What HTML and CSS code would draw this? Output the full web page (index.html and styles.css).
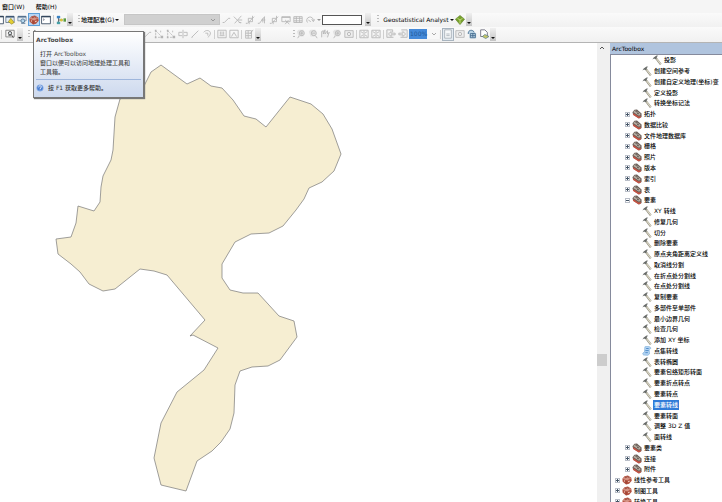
FILE: index.html
```html
<!DOCTYPE html>
<html lang="zh-CN">
<head>
<meta charset="utf-8">
<title>ArcMap</title>
<link rel="stylesheet" href="styles.css">
</head>
<body>
<svg class="defs" aria-hidden="true">
  <symbol id="toolbox" viewBox="0 0 12 12"><path d="M.5 4.500 3 1.500 7 .5l4 2.500.7 4L8.500 10.500 5 11.500.8 8z" fill="#b3503f"/><path d="M.8 4.500 6 6.500 11.300 4 7 1.500 3.500 2.500z" fill="#d59384"/><path d="M3.500 3.500 7 2l2 1.500" fill="none" stroke="#8a3b2e"/><path d="M5 6.500v4.500" stroke="#8a3b2e" stroke-width=".7"/><path d="M2.500 7l1 .5M7.500 8l1.500-.7" stroke="#f3e2d4" stroke-width="1.400"/></symbol>
  <symbol id="toolset" viewBox="0 0 12 12"><path d="M.5 4 3 1l3-.5 5.500 5v4l-3 2L1.500 7z" fill="#6b5f58"/><path d="M1.500 3.500 4 1.500l6.500 4.500-2 2z" fill="#bdb3a8"/><path d="M1.500 6l6.500 4.300 2.500-1.300" fill="none" stroke="#c65343" stroke-width="1.800"/><path d="M4 2.500 6.500 4M6 5l2.500 1" stroke="#4a423c"/></symbol>
  <symbol id="hammer" viewBox="0 0 12 12"><path d="M4.500 3.500 10.500 11.200" stroke="#8f8b7c" stroke-width="2.400"/><path d="M4.800 3.600 10.600 11" stroke="#dedac8" stroke-width="1.300"/><path d="M.5 5.500 2 3 5.500.6 7.500.8 5.500 2.500 6 3.800 4 5 2.600 4.300z" fill="#686b69"/></symbol>
  <symbol id="script" viewBox="0 0 12 12"><path d="M3.500 1C6 0 11 .5 10.500 3L8.500 4 9 9.500 7 11.200 2 10.800C0 10 1 7.500 3 7.500z" fill="#b4d4f3" stroke="#79add9" stroke-width=".8"/><path d="M5 3h3M4 5.500h4M4 8h3" stroke="#3e7fc1"/></symbol>
  <symbol id="note" viewBox="0 0 12 12"><path d="M1 2h10v7H1z" fill="#e6eef5" stroke="#65798e"/><path d="M1 2h10" stroke="#3c5674" stroke-width="2"/><path d="M7 4l4 5-3 2-4-3z" fill="#e3cf35" stroke="#8c7b25" stroke-width=".7"/></symbol>
  <symbol id="search" viewBox="0 0 12 12"><path d="M1 2h10v5H1z" fill="#e4ebf2" stroke="#7891a9"/><path d="M1 2h10" stroke="#54718e" stroke-width="2"/><circle cx="7" cy="7" r="2.300" fill="#b5d7ed" stroke="#50718f"/><path d="M5 10h5" stroke="#50718f"/></symbol>
  <symbol id="window" viewBox="0 0 12 12"><path d="M.7 1.500h10.600v9H.7z" fill="#fff" stroke="#33465c"/><path d="M.5 2h11" stroke="#33465c" stroke-width="1.600"/><path d="M2.500 4.500l1.500 1-1.500 1" fill="none" stroke="#667"/></symbol>
  <symbol id="model" viewBox="0 0 12 12"><path d="M3 2v7M3 6h5" stroke="#555"/><path d="M1 1h4v3H1z" fill="#3a82c3"/><path d="M1 8h4v3H1z" fill="#48a0a8"/><circle cx="6.500" cy="6" r="1.800" fill="#d6c33e"/><path d="M9 4h3v4H9z" fill="#5a9943"/></symbol>
  <symbol id="identify" viewBox="0 0 12 12"><path d="M1 1.500h10v8H1z" fill="#f7f7f7" stroke="#777"/><circle cx="6" cy="5" r="2" fill="#dce4ea" stroke="#444"/><path d="M7.500 6.500l2.500 4M4 7.500h3" stroke="#444"/></symbol>
  <symbol id="line" viewBox="0 0 12 12"><path d="M2 9h2l5-5h2" fill="none" stroke="currentColor"/></symbol>
  <symbol id="cross" viewBox="0 0 12 12"><path d="M1 2l8 8M10 1 2 10M6 6h5M7 9h3" stroke="currentColor"/></symbol>
  <symbol id="shift" viewBox="0 0 12 12"><path d="M1 10h2l8-8M4 4h5v4H4zM5 8v3M9 1v3" fill="none" stroke="currentColor"/></symbol>
  <symbol id="angle" viewBox="0 0 12 12"><path d="M1 10h2l6-8v8M5 6h5M7 4v5" fill="none" stroke="currentColor"/></symbol>
  <symbol id="table" viewBox="0 0 12 12"><path d="M1 2h10v7H1zM1 4h10M1 7h10M4 2v7M8 2v7" fill="none" stroke="currentColor"/></symbol>
  <symbol id="tablex" viewBox="0 0 12 12"><path d="M1 2h10v6H1zM1 3h10M5 6l5 5M9 6l-4 5" fill="none" stroke="currentColor"/></symbol>
  <symbol id="rotate" viewBox="0 0 12 12"><path d="M3 9A4 4 0 1 1 10 7M8 5l2 3 2-3M4 6l3 2" fill="none" stroke="currentColor"/></symbol>
  <symbol id="nodes" viewBox="0 0 12 12"><path d="M2 2v8M2 2l7 7M5 10h5M8 2v3" stroke="currentColor" stroke-dasharray="2 1"/><path d="M1 1h2v2H1zM1 9h2v2H1zM8 8h3v3H8z" fill="currentColor"/></symbol>
  <symbol id="split" viewBox="0 0 12 12"><path d="M6 1v10M5 4H1v4h4M7 4h4v4H7" fill="none" stroke="currentColor"/></symbol>
  <symbol id="slash" viewBox="0 0 12 12"><path d="M2 10 10 2M2 10h1" stroke="currentColor"/></symbol>
  <symbol id="hook" viewBox="0 0 12 12"><path d="M2 4c3-4 9-2 8 2-1 3-3 4-3 4M4 5h3v3" fill="none" stroke="currentColor"/></symbol>
  <symbol id="tri" viewBox="0 0 12 12"><path d="M1 1.500h10v9H1zM3 9l3-5 3 5" fill="none" stroke="currentColor"/></symbol>
  <symbol id="cols" viewBox="0 0 12 12"><path d="M1 1.500h10v9H1zM4 3v4M6 3v4M8 3v4M3 8h6" fill="none" stroke="currentColor"/></symbol>
  <symbol id="form" viewBox="0 0 12 12"><path d="M2 2h7v9H2zM2 5h7M2 8h7M5 2v9M7 6l4-5" fill="none" stroke="currentColor"/></symbol>
  <symbol id="zoomin" viewBox="0 0 12 12"><path d="M1 3l2-2h6v8H3z" fill="#e4e4e4"/><circle cx="7" cy="5" r="3" fill="none" stroke="currentColor"/><path d="M4 8l-2 3M5 5h4M7 3v4" stroke="currentColor"/></symbol>
  <symbol id="zoomout" viewBox="0 0 12 12"><path d="M1 3l2-2h6v8H3z" fill="#e4e4e4"/><circle cx="7" cy="5" r="3" fill="none" stroke="currentColor"/><path d="M5 5h4M9 8l2 3" stroke="currentColor"/></symbol>
  <symbol id="hand" viewBox="0 0 12 12"><path d="M2 10V3l2-1v4l2-5v5l3-4v4l2-2-2 6" fill="#eee" stroke="currentColor"/></symbol>
  <symbol id="full" viewBox="0 0 12 12"><path d="M1 2h10v8H1z" fill="#eee" stroke="currentColor"/><circle cx="6" cy="6" r="2" fill="none" stroke="currentColor"/></symbol>
  <symbol id="inward" viewBox="0 0 12 12"><path d="M1 1.500h10v9H1zM2 3l3 2M10 3 7 5M2 9l3-2M10 9 7 7M6 2v8" fill="none" stroke="currentColor"/></symbol>
  <symbol id="back" viewBox="0 0 12 12"><path d="M1 1h7v3M1 1v9h8M3 6l3-3v2h5v2H6v2z" fill="#eee" stroke="currentColor"/></symbol>
  <symbol id="forward" viewBox="0 0 12 12"><path d="M4 1h7v9H3M9 6 6 3v2H1v2h5v2z" fill="#eee" stroke="currentColor"/></symbol>
  <symbol id="page" viewBox="0 0 12 12"><path d="M2 1h8v10H2z" fill="#f6f8fa" stroke="#a5adb5"/><path d="M4 6h4M4 8h4" stroke="#a5adb5"/></symbol>
  <symbol id="refresh" viewBox="0 0 12 12"><path d="M1 5C1 0 8 0 9 4l2 1v6H3V6z" fill="#b9d3e4"/><path d="M1.500 6C1 1 7 0 8.500 4M4 5.500h6v5H4zM7 5v5M4 8h6" fill="none" stroke="#41688a"/></symbol>
  <symbol id="layout" viewBox="0 0 12 12"><path d="M2 1h5l3 3v5H2z" fill="#fff" stroke="#667"/><path d="M4 9l3-2.500 5 2.500-4 2.500z" fill="#c5c566" stroke="#4f7688" stroke-width=".8"/></symbol>
  <symbol id="geo" viewBox="0 0 12 12"><path d="M.5 5 6 .5 11.500 5 6 11.500z" fill="#76a22c" stroke="#5d7c26" stroke-width=".7"/><path d="M3 4l3 2 3-2M6 6v4" stroke="#d0e08b" fill="none"/></symbol>
  <symbol id="help" viewBox="0 0 12 12"><circle cx="6" cy="6" r="5" fill="#4a7fd3" stroke="#a7c4ef"/><path d="M4 5c0-3 4-3 4-.5C8 6 6 6 6 7.500M6 8.500v1" fill="none" stroke="#fff" stroke-width="1.300"/></symbol>
  <symbol id="pointer" viewBox="0 0 12 12"><path d="M3 1v9l2-2 2 3 1-1-2-3h3z" fill="#222"/></symbol>
</svg>

<header class="bars">
  <nav class="menubar"><button>窗口(W)</button><button>帮助(H)</button></nav>
  <div class="toolbar">
    <button class="icon clip" aria-label="目录"><svg><use href="#window"/></svg></button>
    <button class="icon" aria-label="注记"><svg><use href="#note"/></svg></button>
    <button class="icon" aria-label="搜索"><svg><use href="#search"/></svg></button>
    <button class="icon active" aria-label="ArcToolbox" aria-describedby="tip"><svg><use href="#toolbox"/></svg></button>
    <button class="icon" aria-label="Python"><svg><use href="#window"/></svg></button>
    <i class="sep"></i>
    <button class="icon" aria-label="模型构建器"><svg><use href="#model"/></svg></button>
    <button class="more" aria-label="更多"></button>
    <i class="grip"></i>
    <button class="drop">地理配准(G)</button>
    <select class="layer" aria-label="图层" disabled><option></option></select>
    <span class="group off">
      <button class="icon" aria-label="添加控制点"><svg><use href="#line"/></svg></button>
      <button class="icon" aria-label="自动配准"><svg><use href="#cross"/></svg></button>
      <button class="icon" aria-label="选择链接"><svg><use href="#shift"/></svg></button>
      <button class="icon" aria-label="缩放至链接"><svg><use href="#angle"/></svg></button>
      <button class="icon" aria-label="删除链接"><svg><use href="#shift"/></svg></button>
      <button class="icon" aria-label="查看器"><svg><use href="#tablex"/></svg></button>
      <button class="icon" aria-label="链接表"><svg><use href="#table"/></svg></button>
      <button class="icon" aria-label="旋转"><svg><use href="#rotate"/></svg></button>
    </span>
    <button class="drop mini" aria-label="旋转选项"></button>
    <input class="angle" type="text" aria-label="角度">
    <button class="more" aria-label="更多"></button>
    <i class="grip wide"></i>
    <button class="drop latin">Geostatistical Analyst</button>
    <button class="icon" aria-label="地统计向导"><svg><use href="#geo"/></svg></button>
    <button class="more" aria-label="更多"></button>
  </div>
  <div class="toolbar">
    <i class="sep"></i>
    <button class="icon identify" aria-label="识别"><svg><use href="#identify"/></svg></button>
    <button class="more" aria-label="更多"></button>
    <i class="grip"></i>
    <button class="icon covered" aria-label="编辑工具"><svg><use href="#pointer"/></svg></button>
    <span class="group off">
      <button class="icon" aria-label="追踪"><svg><use href="#line"/></svg></button>
      <button class="icon" aria-label="编辑折点"><svg><use href="#nodes"/></svg></button>
      <button class="icon" aria-label="修整要素"><svg><use href="#nodes"/></svg></button>
      <button class="icon" aria-label="裁剪面"><svg><use href="#split"/></svg></button>
      <button class="icon" aria-label="分割"><svg><use href="#slash"/></svg></button>
      <button class="icon" aria-label="旋转"><svg><use href="#hook"/></svg></button>
      <i class="sep"></i>
      <button class="icon" aria-label="属性"><svg><use href="#cols"/></svg></button>
      <button class="icon" aria-label="草图属性"><svg><use href="#tri"/></svg></button>
      <i class="sep"></i>
      <button class="icon" aria-label="创建要素"><svg><use href="#form"/></svg></button>
    </span>
    <button class="more" aria-label="更多"></button>
    <i class="grip far"></i>
    <span class="group off">
      <button class="icon" aria-label="放大"><svg><use href="#zoomin"/></svg></button>
      <button class="icon" aria-label="缩小"><svg><use href="#zoomout"/></svg></button>
      <button class="icon" aria-label="平移"><svg><use href="#hand"/></svg></button>
      <button class="icon" aria-label="全图"><svg><use href="#zoomin"/></svg></button>
      <button class="icon" aria-label="整页"><svg><use href="#full"/></svg></button>
      <i class="sep"></i>
      <button class="icon" aria-label="固定放大"><svg><use href="#inward"/></svg></button>
      <button class="icon" aria-label="固定缩小"><svg><use href="#inward"/></svg></button>
      <i class="sep"></i>
      <button class="icon" aria-label="后退"><svg><use href="#back"/></svg></button>
      <button class="icon" aria-label="前进"><svg><use href="#forward"/></svg></button>
    </span>
    <select class="scale" aria-label="比例" disabled><option>100%</option></select>
    <i class="sep"></i>
    <button class="icon pressed" aria-label="切换草图"><svg><use href="#page"/></svg></button>
    <button class="icon off" aria-label="焦点数据框"><svg><use href="#full"/></svg></button>
    <button class="icon" aria-label="更改布局"><svg><use href="#refresh"/></svg></button>
    <button class="icon" aria-label="数据驱动页面"><svg><use href="#layout"/></svg></button>
    <button class="more" aria-label="更多"></button>
  </div>
  <div class="tooltip" id="tip" role="tooltip">
    <h2>ArcToolbox</h2>
    <p>打开 <span class="latin">ArcToolbox</span><br>窗口以便可以访问地理处理工具和<br>工具箱。</p>
    <footer><svg><use href="#help"/></svg>按 F1 获取更多帮助。</footer>
  </div>
</header>

<main class="work">
  <section class="map" aria-label="地图">
    <svg class="canvas" aria-hidden="true"><path d="M161 22 187 41 200 35 211 43 222 45 233 57 244 73 256 76 266 84 290 54 311 61 323 71 332 86 341 111 334 128 322 139 309 145 304 156 296 167 283 183 269 190 251 191 235 199 222 221V235L230 247 243 250 258 250 279 273 294 278 297 294 280 317 268 323 252 324 240 328 235 342 234 370 230 386 221 399 212 408 197 418 186 448 161 442 154 415 161 380 177 349 204 327 218 305 193 292 190 293 205 277 167 232 154 228 140 226 115 246 103 248 89 241 80 229 71 221 58 211 56 196 71 194 76 180 78 163 94 168 100 159 101 144 103 133 111 117 113 107 115 74 120 56 143 45 151 29z"/></svg>
  </section>
  <div class="scroll" role="scrollbar" aria-label="滚动" aria-controls="tree" aria-valuenow="76"><svg viewBox="0 0 10 10"><path d="M3 6l2-2 2 2" fill="none" stroke="#555"/></svg><i class="before"></i><i class="thumb"></i><i class="after"></i></div>
  <aside class="panel">
    <h1>ArcToolbox</h1>
    <ul id="tree" class="tree">
      <li class="l4"><svg><use href="#hammer"/></svg><span>投影</span></li>
      <li class="l3"><svg><use href="#hammer"/></svg><span>创建空间参考</span></li>
      <li class="l3"><svg><use href="#hammer"/></svg><span>创建自定义地理(坐标)变</span></li>
      <li class="l3"><svg><use href="#hammer"/></svg><span>定义投影</span></li>
      <li class="l3"><svg><use href="#hammer"/></svg><span>转换坐标记法</span></li>
      <li class="l2"><button class="plus" aria-label="展开"></button><svg><use href="#toolset"/></svg><span>拓扑</span></li>
      <li class="l2"><button class="plus" aria-label="展开"></button><svg><use href="#toolset"/></svg><span>数据比较</span></li>
      <li class="l2"><button class="plus" aria-label="展开"></button><svg><use href="#toolset"/></svg><span>文件地理数据库</span></li>
      <li class="l2"><button class="plus" aria-label="展开"></button><svg><use href="#toolset"/></svg><span>栅格</span></li>
      <li class="l2"><button class="plus" aria-label="展开"></button><svg><use href="#toolset"/></svg><span>照片</span></li>
      <li class="l2"><button class="plus" aria-label="展开"></button><svg><use href="#toolset"/></svg><span>版本</span></li>
      <li class="l2"><button class="plus" aria-label="展开"></button><svg><use href="#toolset"/></svg><span>索引</span></li>
      <li class="l2"><button class="plus" aria-label="展开"></button><svg><use href="#toolset"/></svg><span>表</span></li>
      <li class="l2"><button class="minus" aria-label="折叠"></button><svg><use href="#toolset"/></svg><span>要素</span></li>
      <li class="l3"><svg><use href="#hammer"/></svg><span>XY 转线</span></li>
      <li class="l3"><svg><use href="#hammer"/></svg><span>修复几何</span></li>
      <li class="l3"><svg><use href="#hammer"/></svg><span>切分</span></li>
      <li class="l3"><svg><use href="#hammer"/></svg><span>删除要素</span></li>
      <li class="l3"><svg><use href="#hammer"/></svg><span>原点夹角距离定义线</span></li>
      <li class="l3"><svg><use href="#hammer"/></svg><span>取消线分割</span></li>
      <li class="l3"><svg><use href="#hammer"/></svg><span>在折点处分割线</span></li>
      <li class="l3"><svg><use href="#hammer"/></svg><span>在点处分割线</span></li>
      <li class="l3"><svg><use href="#hammer"/></svg><span>复制要素</span></li>
      <li class="l3"><svg><use href="#hammer"/></svg><span>多部件至单部件</span></li>
      <li class="l3"><svg><use href="#hammer"/></svg><span>最小边界几何</span></li>
      <li class="l3"><svg><use href="#hammer"/></svg><span>检查几何</span></li>
      <li class="l3"><svg><use href="#hammer"/></svg><span>添加 XY 坐标</span></li>
      <li class="l3"><svg><use href="#script"/></svg><span>点集转线</span></li>
      <li class="l3"><svg><use href="#hammer"/></svg><span>表转椭圆</span></li>
      <li class="l3"><svg><use href="#hammer"/></svg><span>要素包络矩形转面</span></li>
      <li class="l3"><svg><use href="#hammer"/></svg><span>要素折点转点</span></li>
      <li class="l3"><svg><use href="#hammer"/></svg><span>要素转点</span></li>
      <li class="l3 selected"><svg><use href="#hammer"/></svg><span>要素转线</span></li>
      <li class="l3"><svg><use href="#hammer"/></svg><span>要素转面</span></li>
      <li class="l3"><svg><use href="#hammer"/></svg><span>调整 3D Z 值</span></li>
      <li class="l3"><svg><use href="#hammer"/></svg><span>面转线</span></li>
      <li class="l2"><button class="plus" aria-label="展开"></button><svg><use href="#toolset"/></svg><span>要素类</span></li>
      <li class="l2"><button class="plus" aria-label="展开"></button><svg><use href="#toolset"/></svg><span>连接</span></li>
      <li class="l2"><button class="plus" aria-label="展开"></button><svg><use href="#toolset"/></svg><span>附件</span></li>
      <li class="l1"><button class="plus" aria-label="展开"></button><svg><use href="#toolbox"/></svg><span>线性参考工具</span></li>
      <li class="l1"><button class="plus" aria-label="展开"></button><svg><use href="#toolbox"/></svg><span>制图工具</span></li>
      <li class="l1"><button class="plus" aria-label="展开"></button><svg><use href="#toolbox"/></svg><span>转换工具</span></li>
    </ul>
  </aside>
</main>
</body>
</html>
```
FILE: styles.css
```css
* { box-sizing: border-box; }
body {
  margin: 0;
  height: 100vh;
  display: flex;
  flex-direction: column;
  overflow: hidden;
  background: #f5f5f5;
  color: #000;
  font: 500 6px/10px "DejaVu Sans", "Noto Sans CJK SC", sans-serif;
}
button, input, select { font: inherit; color: inherit; margin: 0; padding: 0; border: 0; background: none; border-radius: 0; }
svg { display: block; flex: none; }
.defs { position: absolute; width: 0; height: 0; }
.latin { font-family: "DejaVu Sans", sans-serif; }

.bars { position: relative; flex: none; border-bottom: 1px solid #b4b4b4; }
.menubar { display: flex; gap: 11px; height: 13px; padding-left: 2px; }
.toolbar { display: flex; align-items: center; height: 14px; padding-bottom: 1px; background: linear-gradient(#fafafa, #f1f1f1); white-space: nowrap; }
.toolbar + .toolbar { height: 15px; }
.toolbar > *, .group > * { flex: none; }
.group { display: flex; align-items: center; }
.icon { width: 12px; height: 13px; display: flex; align-items: center; justify-content: center; color: #333; }
.icon svg { width: 10px; height: 10px; }
.clip { width: 4px; justify-content: flex-end; overflow: hidden; }
.active { background: #b9d7f4; border: 1px solid #5c9fd9; }
.pressed { background: #e4ebf1; border: 1px solid #a8b4bf; }
.off, .off .icon { color: #b4b4b4; }
.sep { width: 1px; height: 9px; margin: 0 1px; background: #cfcfcf; }
.grip { width: 2px; height: 9px; margin: 0 1px 0 5px; background: repeating-linear-gradient(#bbb 0 1px, transparent 1px 3px); }
.grip.wide { margin: 0 4px 0 6px; }
.grip.far { margin: 0 0 0 32px; }
.more { width: 6px; height: 13px; background: linear-gradient(#f0f0f0, #c4c4c4); display: flex; align-items: flex-end; justify-content: center; }
.more::after, .drop::after { content: ""; border: 2px solid transparent; border-top-color: #111; border-bottom: 0; }
.more::after { margin-bottom: 2px; }
.drop { display: flex; align-items: center; gap: 1px; }
.mini { width: 6px; justify-content: center; color: #999; }
.mini::after { border-top-color: #999; }
.layer, .scale { appearance: none; background: #d0d0d0 url("data:image/svg+xml,%3Csvg xmlns='http://www.w3.org/2000/svg' viewBox='0 0 8 8'%3E%3Cpath d='M2 3l2 2 2-2' fill='none' stroke='%23999'/%3E%3C/svg%3E") right 2px center / 8px 8px no-repeat; opacity: 1; }
.layer { width: 96px; height: 11px; margin-left: 5px; border: 1px solid #c6c6c6; }
.angle { width: 40px; height: 10px; margin: 0 3px 0 0; border: 1px solid #555; background: #fff; }
.identify { width: 14px; }
.covered { width: 12px; margin-right: 98px; }
.scale { width: 30px; height: 10px; padding-left: 1px; color: #205a9a; background-color: #f4f4f4; background-image: url("data:image/svg+xml,%3Csvg xmlns='http://www.w3.org/2000/svg' viewBox='0 0 8 8'%3E%3Cpath d='M2 3l2 2 2-2' fill='none' stroke='%23aaa'/%3E%3C/svg%3E"), linear-gradient(90deg, #4489d8 18px, #f8f8f8 18px); background-size: 8px 8px, 100% 100%; background-position: right 1px center, 0 0; }

.tooltip {
  position: absolute;
  z-index: 1;
  left: 33px;
  top: 31px;
  width: 111px;
  padding: 3px 2px 2px;
  border: 1px solid #777;
  box-shadow: 1px 1px 1px #777;
  background: linear-gradient(#fff, #cdd9ee);
  color: #4c4c4c;
}
.tooltip h2 { margin: 0; font: bold 6px/10px "DejaVu Sans", sans-serif; }
.tooltip p { margin: 4px 0 3px 4px; line-height: 9px; white-space: nowrap; }
.tooltip footer { display: flex; align-items: center; gap: 4px; height: 16px; border-top: 1px solid #9eb6dc; color: #333; }
.tooltip svg { width: 8px; height: 8px; }

.work { flex: 1; min-height: 0; display: flex; background: #f0f0f0; }
.map { flex: 1; min-width: 0; overflow: hidden; background: #fff; }
.canvas { width: 100%; height: 100%; }
.canvas path { fill: #f6eed2; stroke: #777; stroke-width: .7; }
.scroll { width: 10px; display: flex; flex-direction: column; background: #f0f0f0; }
.scroll svg { width: 10px; height: 10px; }
.before { flex: 301; }
.thumb { height: 12px; background: #cdcdcd; }
.after { flex: 136; }
.panel { width: 112px; margin-left: 3px; display: flex; flex-direction: column; overflow: hidden; background: #fff; }
.panel h1 { flex: none; margin: 0; padding-left: 2px; background: #b0c4de; font: 6px/11px "DejaVu Sans", sans-serif; }
.tree { flex: 1; min-height: 0; margin: 0 0 -5px; padding: 0; list-style: none; display: grid; grid-auto-rows: minmax(10px, 1fr); border: 1px solid #858a9c; border-width: 1px 0 0 1px; }
.tree li { display: flex; align-items: center; white-space: nowrap; min-width: 0; }
.tree svg { width: 10px; height: 10px; margin-right: 1px; }
.tree span { padding: 0 1px; }
.l1 { padding-left: 4px; }
.l2 { padding-left: 14px; }
.l3 { padding-left: 31px; }
.l4 { padding-left: 41px; }
.selected span { background: #2f7bd8; color: #fff; }
.plus, .minus { flex: none; width: 5px; height: 5px; margin-right: 2px; border: 1px solid #b9bec8; background: linear-gradient(#456, #456) center / 3px 1px no-repeat, linear-gradient(#456, #456) center / 1px 3px no-repeat; }
.minus { background: linear-gradient(#456, #456) center / 3px 1px no-repeat; }
```
